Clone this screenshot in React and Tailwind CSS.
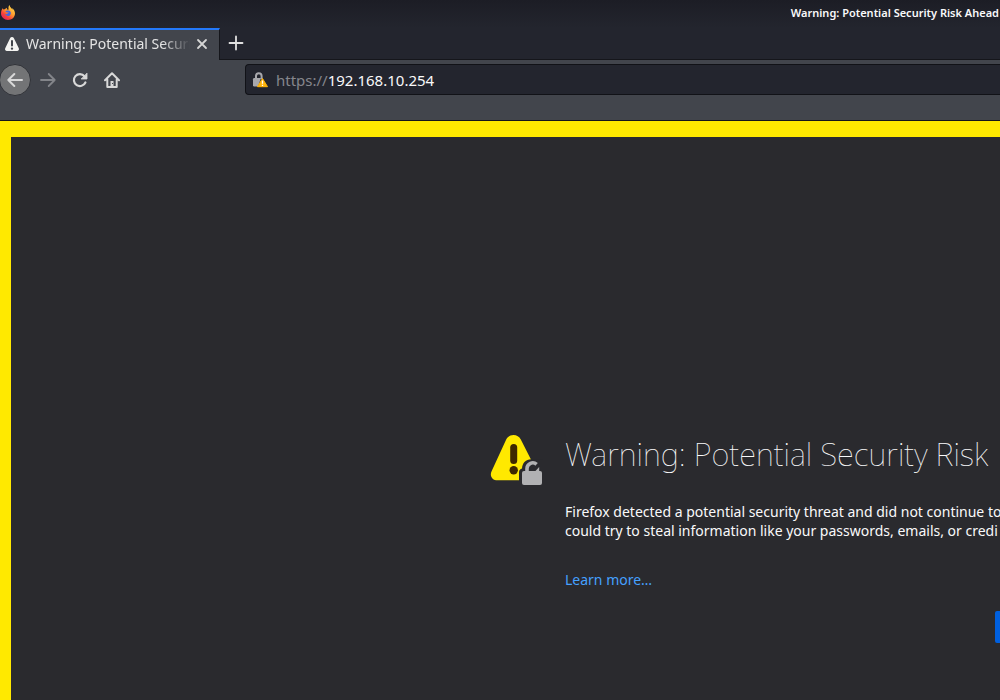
import React from "react";

function FirefoxLogo() {
  return (
    <svg viewBox="0 0 16 16" className="size-4 shrink-0" aria-hidden="true">
      <defs>
        <linearGradient id="flame" x1="0.85" y1="0.05" x2="0.2" y2="0.95">
          <stop offset="0" stopColor="#ffe14d" />
          <stop offset="0.45" stopColor="#ff9a2e" />
          <stop offset="0.75" stopColor="#f5413c" />
          <stop offset="1" stopColor="#e0265e" />
        </linearGradient>
      </defs>
      <path
        d="M9.4 0c.3 1.300 1 2.400 2 3.300.5.4.8.9 1 1.400 0-.7-.1-1.200-.3-1.700C14 4.500 15 6.500 15 8.500c0 3.700-3.200 6.500-7 6.500s-7-2.800-7-6.700C1 6.400 1.700 4.500 2.800 3c0 .6.1 1 .4 1.400.6-.2 1.200-.2 1.800-.1.5-.8 1.200-1.300 2.100-1.600-.3.6-.4 1.200-.2 1.700h1.900C8.100 3.300 8.500 1 9.400 0z"
        fill="url(#flame)"
      />
      <path d="M5.300 6.200C6.500 5.300 9 5 10.300 6.600c1 1.400.6 3.300-.8 4.100-1.700.9-4-.1-4.200-1.900.7.5 1.600.5 2.300-.2.600-.5 1-.7 1.300-1.100-.8-.3-2.100 0-2.600-.600-.4-.3-.7-.5-1-.7z" fill="#3f67e0" />
    </svg>
  );
}

function WarningIcon() {
  return (
    <svg viewBox="0 0 16 16" className="size-4 shrink-0" aria-hidden="true">
      <path
        fill="#f4f4f2"
        fillRule="evenodd"
        d="M8 1c.8 0 1.400.4 1.800 1.100l5 10.200c.6 1.300-.2 2.700-1.700 2.700H2.900c-1.500 0-2.300-1.400-1.700-2.700l5-10.200C6.600 1.400 7.200 1 8 1zM7 5v4.500a1 1 0 0 0 2 0V5a1 1 0 0 0-2 0zm1 6.400a1.200 1.200 0 1 0 0 2.400 1.200 1.200 0 0 0 0-2.400z"
      />
    </svg>
  );
}

function Glyph({ children }) {
  return (
    <svg viewBox="0 0 16 16" className="size-4" fill="none" stroke="currentColor" strokeWidth="2" strokeLinecap="round" strokeLinejoin="round" aria-hidden="true">
      {children}
    </svg>
  );
}

function TabStrip() {
  return (
    <div className="flex h-8 items-stretch bg-[#23252e]">
      <div className="flex w-[220px] shrink-0 items-center border-t-2 border-r border-t-[#2479fa] border-r-[#15161b] bg-[#42454c] pr-[9px] pb-0.5 pl-1">
        <WarningIcon />
        <span className="ml-1.5 flex-1 overflow-hidden text-sm leading-5 whitespace-nowrap text-[#e4e4e4] [mask-image:linear-gradient(to_left,transparent,black_28px)]">
          Warning: Potential Security Risk Ahead
        </span>
        <button type="button" aria-label="Close tab" className="ml-1 text-[#d6d6d6]">
          <Glyph><path d="M4 4l8 8M12 4l-8 8" strokeWidth="1.800" /></Glyph>
        </button>
      </div>
      <div className="flex flex-1 items-center border-b border-[#15161b] pb-px pl-2">
        <button type="button" aria-label="New tab" className="text-[#e0e0e0]">
          <Glyph><path d="M8 1.500v13M1.500 8h13" strokeWidth="1.800" /></Glyph>
        </button>
      </div>
    </div>
  );
}

function NavBar() {
  return (
    <div className="flex h-[61px] items-start border-b border-[#15161b] bg-[#42454c] pt-1">
      <div className="flex h-8 shrink-0 items-center text-[#d8d8d8]">
        <button type="button" aria-label="Back" className="mr-px -ml-px flex size-8 items-center justify-center rounded-full border border-[#303238] bg-[#737476]">
          <Glyph><path d="M15 8H1.300M7.300 2L1.300 8l6 6" /></Glyph>
        </button>
        <button type="button" aria-label="Forward" disabled className="flex w-8 justify-center text-[#83858a]">
          <Glyph><path d="M1 8h13.700M8.700 2l6 6-6 6" strokeWidth="1.800" /></Glyph>
        </button>
        <button type="button" aria-label="Reload" className="flex w-8 justify-center">
          <Glyph>
            <path d="M12.500 4.200A6 6 0 1 0 13.400 10.500" strokeWidth="2.200" />
            <path d="M15 1.500V7H9.500z" fill="currentColor" strokeWidth="0.800" />
          </Glyph>
        </button>
        <button type="button" aria-label="Home" className="flex w-8 justify-center">
          <Glyph>
            <path d="M1 8.200L8 1.200l7 7M3.300 7.500V15h9.400V7.500" />
            <path d="M8 9v5" strokeLinecap="butt" strokeWidth="3" />
            <path d="M8.500 11v1" stroke="#42454c" strokeLinecap="butt" strokeWidth="1" />
          </Glyph>
        </button>
      </div>
      <div className="ml-[117px] flex h-[31px] flex-1 items-center overflow-hidden rounded-l-sm border border-r-0 border-[#111217] bg-[#23252e] pl-1.5">
        <svg viewBox="0 0 16 16" className="size-4 shrink-0" aria-hidden="true">
          <path d="M4 7V4a2.800 2.800 0 0 1 5.600 0V7" fill="none" stroke="#a8a8ac" strokeWidth="2" />
          <path d="M2.200 6H9L6 14.500H2.200Q1 14.500 1 13.300V7.200Q1 6 2.200 6z" fill="#a8a8ac" />
          <path d="M10.500 6.500L15.500 14.700H5.500z" fill="#ffb40a" stroke="#ffb40a" strokeLinejoin="round" />
          <path d="M10.500 8.500v3.200M10.500 12.700v1.300" stroke="#fff" strokeWidth="1.300" />
        </svg>
        <label htmlFor="address" className="ml-2 text-[15px] leading-5 text-[#85868c]">https://</label>
        <input id="address" aria-label="Address" defaultValue="192.168.10.254" className="min-w-0 flex-1 bg-transparent text-[15px] leading-5 text-[#f9f9fa] outline-none" />
      </div>
    </div>
  );
}

function InsecureSiteIcon() {
  return (
    <svg viewBox="0 0 54 54" className="size-[54px] shrink-0" aria-hidden="true">
      <path d="M24.500 2c3.200 0 5.800 1.700 7.300 4.500l16 31.500c2.500 5-.7 9.300-5.800 9.300H8.500C3.400 47.300.200 43 2.700 38l14.500-31.500C18.700 3.700 21.300 2 24.500 2z" fill="#ffe900" />
      <path d="M24.700 14.500v13" stroke="#3e2800" strokeWidth="7" strokeLinecap="round" />
      <circle cx="24.700" cy="37.300" r="4.200" fill="#3e2800" />
      <path d="M30 54V39q0-2.500 3-3.500C33.300 30 37 26.300 42 26.300H54V54z" fill="#2a2a2e" />
      <path d="M38 39v-3.500a5.700 5.700 0 0 1 9.600-4.100" fill="none" stroke="#b1b1b3" strokeWidth="3.600" />
      <path d="M46 38.500l4.200-4.500v4.500z" fill="#b1b1b3" />
      <rect x="33" y="38" width="20" height="14" rx="2" fill="#b1b1b3" />
    </svg>
  );
}

export default function App() {
  return (
    <div className="flex min-h-screen flex-col overflow-hidden bg-[#2a2a2e] font-['Noto_Sans',sans-serif] text-[#f9f9fa]">
      <header className="flex h-7 items-center justify-between bg-linear-to-b from-[#1c1d25] to-[#23252e] pb-0.5">
        <FirefoxLogo />
        <span className="pr-px text-[11px] font-semibold whitespace-nowrap">Warning: Potential Security Risk Ahead</span>
      </header>
      <TabStrip />
      <NavBar />
      <main className="flex flex-1 items-start overflow-hidden border-t-[16px] border-l-[11px] border-[#ffe900] pt-[296px] pl-[478px]">
        <InsecureSiteIcon />
        <div className="ml-[22px] min-w-0 flex-1">
          <h1 className="text-[31px] leading-[42px] font-thin whitespace-nowrap">Warning: Potential Security Risk</h1>
          <p className="mt-[27px] text-sm leading-[19px] whitespace-nowrap">
            Firefox detected a potential security threat and did not continue to
            <br />
            could try to steal information like your passwords, emails, or credi
          </p>
          <a href="#learn-more" className="mt-[30px] inline-block text-sm leading-5 text-[#45a1ff]">Learn more…</a>
          <div className="mt-5 flex justify-end">
            <button type="button" aria-label="Go back" className="h-8 w-[5px] rounded-l-xs bg-[#0060df]" />
          </div>
        </div>
      </main>
    </div>
  );
}
